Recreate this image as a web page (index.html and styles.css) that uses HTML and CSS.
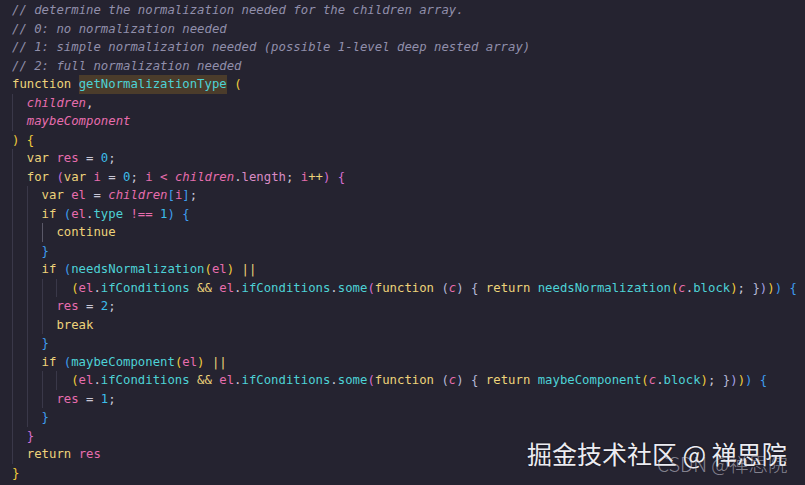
FILE: index.html
```html
<!DOCTYPE html>
<html>
<head>
<meta charset="utf-8">
<link rel="stylesheet" href="styles.css">
</head>
<body>
<div class="editor">
<div class="line c">// determine the normalization needed for the children array.</div>
<div class="line c">// 0: no normalization needed</div>
<div class="line c">// 1: simple normalization needed (possible 1-level deep nested array)</div>
<div class="line c">// 2: full normalization needed</div>
<div class="line"><span class="k">function</span> <span class="f hl">getNormalizationType</span> <span class="b1">(</span></div>
<div class="line"><span class="ind"></span><span class="p">children</span><span class="o">,</span></div>
<div class="line"><span class="ind"></span><span class="p">maybeComponent</span></div>
<div class="line"><span class="b1">)</span> <span class="b1">{</span></div>
<div class="line"><span class="ind"></span><span class="k">var</span> <span class="v">res</span> <span class="o">=</span> <span class="n">0</span><span class="o">;</span></div>
<div class="line"><span class="ind"></span><span class="k">for</span> <span class="b2">(</span><span class="k">var</span> <span class="v">i</span> <span class="o">=</span> <span class="n">0</span><span class="o">;</span> <span class="v">i</span> <span class="v">&lt;</span> <span class="p">children</span><span class="o">.</span><span class="pl">length</span><span class="o">;</span> <span class="v">i</span><span class="k">++</span><span class="b2">)</span> <span class="b2">{</span></div>
<div class="line"><span class="ind"></span><span class="ind"></span><span class="k">var</span> <span class="v">el</span> <span class="o">=</span> <span class="p">children</span><span class="b3">[</span><span class="v">i</span><span class="b3">]</span><span class="o">;</span></div>
<div class="line"><span class="ind"></span><span class="ind"></span><span class="k">if</span> <span class="b3">(</span><span class="v">el</span><span class="o">.</span><span class="pr">type</span> <span class="v">!==</span> <span class="n">1</span><span class="b3">)</span> <span class="b3">{</span></div>
<div class="line"><span class="ind"></span><span class="ind"></span><span class="ind act"></span><span class="k">continue</span></div>
<div class="line"><span class="ind"></span><span class="ind"></span><span class="b3">}</span></div>
<div class="line"><span class="ind"></span><span class="ind"></span><span class="k">if</span> <span class="b3">(</span><span class="f">needsNormalization</span><span class="b1">(</span><span class="v">el</span><span class="b1">)</span> <span class="k">||</span></div>
<div class="line"><span class="ind"></span><span class="ind"></span><span class="ind"></span><span class="ind"></span><span class="b1">(</span><span class="v">el</span><span class="o">.</span><span class="pr">ifConditions</span> <span class="k">&amp;&amp;</span> <span class="v">el</span><span class="o">.</span><span class="pr">ifConditions</span><span class="o">.</span><span class="pr">some</span><span class="b2">(</span><span class="k">function</span> <span class="pa">(</span><span class="p">c</span><span class="pa">)</span> <span class="pa">{</span> <span class="k">return</span> <span class="f">needsNormalization</span><span class="b1">(</span><span class="p">c</span><span class="o">.</span><span class="pr">block</span><span class="b1">)</span><span class="o">;</span> <span class="pa">}</span><span class="b2l">)</span><span class="b1">)</span><span class="b3">)</span> <span class="b3">{</span></div>
<div class="line"><span class="ind"></span><span class="ind"></span><span class="ind"></span><span class="v">res</span> <span class="o">=</span> <span class="n">2</span><span class="o">;</span></div>
<div class="line"><span class="ind"></span><span class="ind"></span><span class="ind"></span><span class="k">break</span></div>
<div class="line"><span class="ind"></span><span class="ind"></span><span class="b3">}</span></div>
<div class="line"><span class="ind"></span><span class="ind"></span><span class="k">if</span> <span class="b3">(</span><span class="f">maybeComponent</span><span class="b1">(</span><span class="v">el</span><span class="b1">)</span> <span class="k">||</span></div>
<div class="line"><span class="ind"></span><span class="ind"></span><span class="ind"></span><span class="ind"></span><span class="b1">(</span><span class="v">el</span><span class="o">.</span><span class="pr">ifConditions</span> <span class="k">&amp;&amp;</span> <span class="v">el</span><span class="o">.</span><span class="pr">ifConditions</span><span class="o">.</span><span class="pr">some</span><span class="b2">(</span><span class="k">function</span> <span class="pa">(</span><span class="p">c</span><span class="pa">)</span> <span class="pa">{</span> <span class="k">return</span> <span class="f">maybeComponent</span><span class="b1">(</span><span class="p">c</span><span class="o">.</span><span class="pr">block</span><span class="b1">)</span><span class="o">;</span> <span class="pa">}</span><span class="b2l">)</span><span class="b1">)</span><span class="b3">)</span> <span class="b3">{</span></div>
<div class="line"><span class="ind"></span><span class="ind"></span><span class="ind"></span><span class="v">res</span> <span class="o">=</span> <span class="n">1</span><span class="o">;</span></div>
<div class="line"><span class="ind"></span><span class="ind"></span><span class="b3">}</span></div>
<div class="line"><span class="ind"></span><span class="b2">}</span></div>
<div class="line"><span class="ind"></span><span class="k">return</span> <span class="v">res</span></div>
<div class="line"><span class="b1">}</span></div>
<div class="wm-main">掘金技术社区 @ 禅思院</div>
<div class="wm-csdn">CSDN @禅思院</div>
</div>
</body>
</html>
```

FILE: styles.css
```css
html, body {
  margin: 0;
  padding: 0;
  background: #252330;
}
body {
  width: 805px;
  height: 485px;
  overflow: hidden;
}
.editor {
  position: relative;
  box-sizing: border-box;
  height: 485px;
  padding: 1px 0 0 12px;
  font-family: "DejaVu Sans Mono", monospace;
  font-size: 12.3px;
  line-height: 18.5px;
  color: #c9c7d6;
}
.line {
  white-space: pre;
  height: 18.5px;
}
.ind {
  display: inline-block;
  width: 2ch;
  height: 18.5px;
  vertical-align: top;
  box-shadow: inset 1px 0 0 #3a3849;
}
.ind.act {
  box-shadow: inset 1px 0 0 #5a5868;
}
.c { color: #918fab; font-style: italic; }
.k { color: #eed37a; }
.f { color: #4dd2d6; }
.hl { background: #4b3c2b; display: inline-block; height: 18.5px; vertical-align: top; }
.v { color: #e76dae; }
.p { color: #e76dae; font-style: italic; }
.n { color: #3cbdea; }
.o { color: #c9c7d6; }
.pr { color: #4dd2d6; }
.pl { color: #d98bc4; }
.pa { color: #b6b9d8; }
.b1 { color: #f2cd3c; }
.b2 { color: #d56fd2; }
.b2l { color: #a6a2e6; }
.b3 { color: #3f9ef0; }
.wm-main {
  position: absolute;
  left: 527px;
  top: 437px;
  font-family: "Noto Sans CJK SC", "Noto Sans", sans-serif;
  font-size: 25px;
  line-height: 32px;
  color: #ececf2;
  text-shadow: 0 0 2px rgba(0, 0, 0, 0.6);
  white-space: nowrap;
}
.wm-csdn {
  position: absolute;
  left: 657px;
  top: 451px;
  font-family: "Noto Sans CJK SC", "Noto Sans", sans-serif;
  font-weight: 300;
  font-size: 19.5px;
  line-height: 26px;
  color: rgba(215, 215, 225, 0.55);
  white-space: nowrap;
}
```
